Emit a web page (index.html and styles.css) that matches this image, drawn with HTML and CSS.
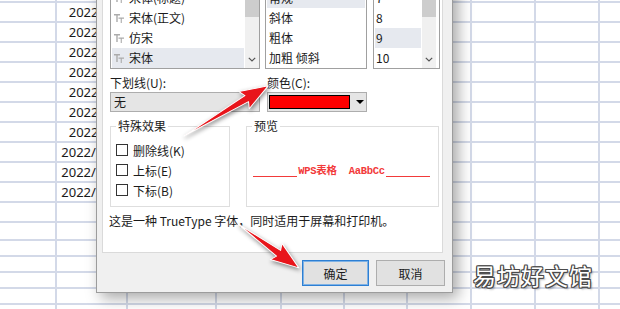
FILE: index.html
```html
<!DOCTYPE html>
<html lang="zh-CN">
<head>
  <meta charset="UTF-8" />
  <title>字体</title>
  <link rel="stylesheet" href="styles.css">
</head>
<body>

<div class="sheet">
  <div class="row"><span></span><span></span><span></span><span></span><span></span><span></span><span></span><span></span><span></span><span></span></div>
  <div class="row"><span></span><span class="date">2022/3/1</span><span></span><span></span><span></span><span></span><span></span><span></span><span></span><span></span></div>
  <div class="row"><span></span><span class="date">2022/3/2</span><span></span><span></span><span></span><span></span><span></span><span></span><span></span><span></span></div>
  <div class="row"><span></span><span class="date">2022/3/3</span><span></span><span></span><span></span><span></span><span></span><span></span><span></span><span></span></div>
  <div class="row"><span></span><span class="date">2022/3/4</span><span></span><span></span><span></span><span></span><span></span><span></span><span></span><span></span></div>
  <div class="row"><span></span><span class="date">2022/3/5</span><span></span><span></span><span></span><span></span><span></span><span></span><span></span><span></span></div>
  <div class="row"><span></span><span class="date">2022/3/6</span><span></span><span></span><span></span><span></span><span></span><span></span><span></span><span></span></div>
  <div class="row"><span></span><span class="date">2022/3/7</span><span></span><span></span><span></span><span></span><span></span><span></span><span></span><span></span></div>
  <div class="row"><span></span><span class="date">2022/3/10</span><span></span><span></span><span></span><span></span><span></span><span></span><span></span><span></span></div>
  <div class="row"><span></span><span class="date">2022/3/11</span><span></span><span></span><span></span><span></span><span></span><span></span><span></span><span></span></div>
  <div class="row"><span></span><span class="date">2022/3/12</span><span></span><span></span><span></span><span></span><span></span><span></span><span></span><span></span></div>
  <div class="row"><span></span><span></span><span></span><span></span><span></span><span></span><span></span><span></span><span></span><span></span></div>
  <div class="row mid"><span></span><span></span><span></span><span></span><span></span><span></span><span></span><span></span><span></span><span></span></div>
  <div class="row short"><span></span><span></span><span></span><span></span><span></span><span></span><span></span><span></span><span></span><span></span></div>
  <div class="row short"><span></span><span></span><span></span><span></span><span></span><span></span><span></span><span></span><span></span><span></span></div>
  <div class="row short"><span></span><span></span><span></span><span></span><span></span><span></span><span></span><span></span><span></span><span></span></div>
  <div class="row short"><span></span><span></span><span></span><span></span><span></span><span></span><span></span><span></span><span></span><span></span></div>
  <div class="row last"><span></span><span></span><span></span><span></span><span></span><span></span><span></span><span></span><span></span><span></span></div>
</div>

<div class="dialog">
  <div class="panel">
    <div class="lists">
      <div class="listbox font-list">
        <ul>
          <li><svg class="tt" viewBox="0 0 10 10"><path d="M0 1h6v1.4H3.7V9H2.3V2.4H0z"/><path d="M4.5 4.5h5.5v1.2H7.8V10H6.7V5.7H4.5z"/></svg>宋体(标题)</li>
          <li><svg class="tt" viewBox="0 0 10 10"><path d="M0 1h6v1.4H3.7V9H2.3V2.4H0z"/><path d="M4.5 4.5h5.5v1.2H7.8V10H6.7V5.7H4.5z"/></svg>宋体(正文)</li>
          <li><svg class="tt" viewBox="0 0 10 10"><path d="M0 1h6v1.4H3.7V9H2.3V2.4H0z"/><path d="M4.5 4.5h5.5v1.2H7.8V10H6.7V5.7H4.5z"/></svg>仿宋</li>
          <li class="sel"><svg class="tt" viewBox="0 0 10 10"><path d="M0 1h6v1.4H3.7V9H2.3V2.4H0z"/><path d="M4.5 4.5h5.5v1.2H7.8V10H6.7V5.7H4.5z"/></svg>宋体</li>
        </ul>
        <div class="vscroll">
          <div class="thumb"></div>
          <svg class="chev" viewBox="0 0 8 5"><polyline points="0.8,0.8 4,4 7.2,0.8"/></svg>
        </div>
      </div>
      <div class="listbox style-list">
        <ul>
          <li class="sel">常规</li>
          <li>斜体</li>
          <li>粗体</li>
          <li>加粗 倾斜</li>
        </ul>
      </div>
      <div class="listbox size-list">
        <ul>
          <li>7</li>
          <li>8</li>
          <li class="sel">9</li>
          <li>10</li>
        </ul>
        <div class="vscroll">
          <div class="thumb"></div>
          <svg class="chev" viewBox="0 0 8 5"><polyline points="0.8,0.8 4,4 7.2,0.8"/></svg>
        </div>
      </div>
    </div>

    <div class="labels">
      <span class="lbl-under">下划线(U):</span>
      <span>颜色(C):</span>
    </div>
    <div class="combos">
      <div class="combo under">无</div>
      <div class="combo color">
        <span class="swatch"></span>
        <span class="caret"></span>
      </div>
    </div>

    <div class="groups">
      <fieldset class="special">
        <legend>特殊效果</legend>
        <div class="checks">
          <div class="check"><span class="box"></span>删除线(K)</div>
          <div class="check"><span class="box"></span>上标(E)</div>
          <div class="check"><span class="box"></span>下标(B)</div>
        </div>
      </fieldset>
      <fieldset class="preview">
        <legend>预览</legend>
        <div class="sample">
          <span class="uline"></span>
          <span class="sample-text">WPS表格&nbsp;&nbsp;AaBbCc</span>
          <span class="uline"></span>
        </div>
      </fieldset>
    </div>

    <p class="desc">这是一种 TrueType 字体，同时适用于屏幕和打印机。</p>
  </div>

  <div class="buttons">
    <button class="btn ok">确定</button>
    <button class="btn">取消</button>
  </div>
</div>

<svg class="arrows" viewBox="0 0 620 309">
  <g transform="translate(184 136) rotate(-30.8)">
    <polygon points="0,0 73,-3.5 70,-10 98,0 70,10 73,3.5"/>
  </g>
  <g transform="translate(238 224) rotate(35.8)">
    <polygon points="0,0 50,-3.5 47,-10 75,0 47,10 50,3.5"/>
  </g>
</svg>

<div class="watermark">易坊好文馆</div>

</body>
</html>
```

FILE: styles.css
```css
body {
  margin: 0;
  width: 620px;
  height: 309px;
  overflow: hidden;
  position: relative;
  background: #fff;
  font-family: "Noto Sans CJK SC", "Noto Sans", sans-serif;
  color: #1b1b1b;
}

/* spreadsheet behind the dialog */
.sheet {
  margin-top: -17px;
}
.row {
  display: grid;
  grid-template-columns: 57px 71px 89px 65px 63px 63px 64px 64px 64px 20px;
  height: 20px;
}
.row.mid {
  height: 18px;
}
.row.short {
  height: 16px;
}
.row.last {
  height: 4px;
}
.row span {
  box-sizing: border-box;
  border-right: 2px solid #d3d9e8;
  border-bottom: 2px solid #d3d9e8;
}
.row span:last-child {
  border-right: 0;
}
.row.last span {
  border-bottom: 0;
}
.row .date {
  font: 13px/18px "Noto Sans", sans-serif;
  color: #1a1a1a;
  text-align: right;
  padding-right: 3px;
}

/* font dialog */
.dialog {
  position: absolute;
  left: 96px;
  top: -40px;
  width: 357px;
  height: 333px;
  box-sizing: border-box;
  background: #f0f0f0;
  border: 1px solid #9c9c9c;
  padding: 5px 9px 0 5px;
  box-shadow: 5px 5px 14px rgba(0,0,0,0.35);
  font-size: 12px;
}
.panel {
  background: #fff;
  border: 1px solid #dadada;
  height: 287px;
  box-sizing: border-box;
  padding: 19px 0 0 7px;
}
.lists {
  display: flex;
  height: 83px;
}
.listbox {
  display: flex;
  box-sizing: border-box;
  height: 83px;
  border: 1px solid #a0a0a0;
  background: #fff;
  overflow: hidden;
}
.font-list {
  width: 150px;
}
.style-list {
  width: 102px;
  margin-left: 5px;
}
.size-list {
  width: 67px;
  margin-left: 6px;
}
.listbox ul {
  list-style: none;
  margin: 0;
  padding: 1px 1px 0;
  flex: 1;
  min-width: 0;
}
.listbox li {
  height: 20px;
  line-height: 20px;
  padding-left: 2px;
  white-space: nowrap;
  display: flex;
  align-items: center;
}
.size-list li {
  padding-left: 1px;
}
.listbox li.sel {
  background: #e6e9ef;
}
.tt {
  width: 10px;
  height: 10px;
  fill: #ababab;
  margin-right: 5px;
  flex: none;
}
.vscroll {
  width: 14px;
  background: #f0f0f0;
  display: flex;
  flex-direction: column;
  align-items: center;
}
.size-list .vscroll {
  margin-right: 3px;
}
.thumb {
  width: 100%;
  height: 30px;
  background: #cdcdcd;
}
.chev {
  width: 8px;
  height: 5px;
  margin-top: auto;
  margin-bottom: 6px;
  fill: none;
  stroke: #555;
  stroke-width: 1.2;
}

.labels {
  display: flex;
  margin-top: 6px;
  line-height: 16px;
}
.lbl-under {
  width: 157px;
}
.combos {
  display: flex;
  gap: 7px;
  margin-top: 1px;
}
.combo {
  height: 20px;
  box-sizing: border-box;
  border: 1px solid #adadad;
  background: #e5e5e5;
  line-height: 18px;
}
.combo.under {
  width: 150px;
  padding-left: 3px;
}
.combo.color {
  width: 100px;
  display: flex;
  align-items: center;
  padding-left: 1px;
}
.swatch {
  width: 81px;
  height: 14px;
  box-sizing: border-box;
  background: #ff0000;
  border: 1px solid #000;
}
.caret {
  width: 0;
  height: 0;
  margin-left: 6px;
  border-left: 4px solid transparent;
  border-right: 4px solid transparent;
  border-top: 4px solid #000;
}

.groups {
  display: flex;
  gap: 16px;
  margin-top: 7px;
}
fieldset {
  margin: 0;
  padding: 0 0 0 5px;
  height: 88px;
  box-sizing: border-box;
  border: 1px solid #dedede;
}
legend {
  padding: 0 2px;
  line-height: 14px;
}
.special {
  width: 120px;
}
.preview {
  width: 193px;
}
.checks {
  margin-top: 7px;
}
.check {
  height: 20px;
  display: flex;
  align-items: center;
}
.box {
  width: 12px;
  height: 12px;
  box-sizing: border-box;
  border: 1px solid #333;
  background: #fff;
  margin-right: 5px;
}
.sample {
  display: flex;
  align-items: flex-end;
  width: 177px;
  height: 16px;
  margin: 30px 0 0 1px;
}
.uline {
  flex: 1;
  border-bottom: 1px solid #f23a3a;
  margin-bottom: 2px;
}
.sample-text {
  font: bold 10.5px/16px "Liberation Mono", "Noto Sans CJK SC", monospace;
  letter-spacing: -0.3px;
  color: #f23a3a;
  padding: 0 1px;
}
.desc {
  margin: 7px 0 0;
  line-height: 14px;
  margin-left: -1px;
}

.buttons {
  display: flex;
  justify-content: flex-end;
  gap: 7px;
  margin: 7px -2px 0 0;
}
.btn {
  height: 26px;
  width: 69px;
  box-sizing: border-box;
  border: 1px solid #adadad;
  background: #e1e1e1;
  font: 12px "Noto Sans CJK SC", sans-serif;
  color: #1b1b1b;
  padding: 0;
}
.btn.ok {
  width: 67px;
  border-color: #2d7fd3;
  box-shadow: inset 0 0 0 1px #7fb2e5;
}

/* annotation overlays */
.arrows {
  position: absolute;
  left: 0;
  top: 0;
  width: 620px;
  height: 309px;
  filter: drop-shadow(1px 2px 2px rgba(0,0,0,0.45));
}
.arrows polygon {
  fill: #e8151b;
  stroke: #fff;
  stroke-width: 1;
  stroke-linejoin: round;
}
.watermark {
  position: absolute;
  left: 473px;
  top: 259px;
  font-size: 23px;
  line-height: 32px;
  letter-spacing: 1px;
  color: #fff;
  text-shadow: 1px 0 #4a4a4a, -1px 0 #4a4a4a, 0 1px #4a4a4a, 0 -1px #4a4a4a,
    1px 1px #4a4a4a, -1px -1px #4a4a4a, 1px -1px #4a4a4a, -1px 1px #4a4a4a,
    2px 2px 2px rgba(0,0,0,0.3);
}
```
